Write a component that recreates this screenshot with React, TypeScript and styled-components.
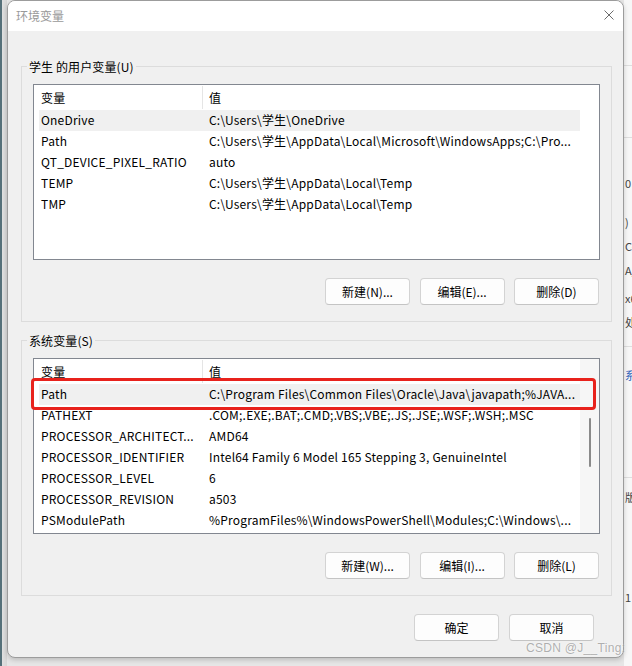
import styled, { createGlobalStyle } from 'styled-components'

interface Variable {
  name: string
  value: string
}

const userVars: Variable[] = [
  { name: 'OneDrive', value: 'C:\\Users\\学生\\OneDrive' },
  { name: 'Path', value: 'C:\\Users\\学生\\AppData\\Local\\Microsoft\\WindowsApps;C:\\Pro...' },
  { name: 'QT_DEVICE_PIXEL_RATIO', value: 'auto' },
  { name: 'TEMP', value: 'C:\\Users\\学生\\AppData\\Local\\Temp' },
  { name: 'TMP', value: 'C:\\Users\\学生\\AppData\\Local\\Temp' },
]

const systemVars: Variable[] = [
  { name: 'Path', value: 'C:\\Program Files\\Common Files\\Oracle\\Java\\javapath;%JAVA...' },
  { name: 'PATHEXT', value: '.COM;.EXE;.BAT;.CMD;.VBS;.VBE;.JS;.JSE;.WSF;.WSH;.MSC' },
  { name: 'PROCESSOR_ARCHITECT...', value: 'AMD64' },
  { name: 'PROCESSOR_IDENTIFIER', value: 'Intel64 Family 6 Model 165 Stepping 3, GenuineIntel' },
  { name: 'PROCESSOR_LEVEL', value: '6' },
  { name: 'PROCESSOR_REVISION', value: 'a503' },
  { name: 'PSModulePath', value: '%ProgramFiles%\\WindowsPowerShell\\Modules;C:\\Windows\\...' },
]

// fragments of the window behind the dialog, top to bottom
const backdrop = [
  { gap: 65, rule: true },
  { gap: 71, rule: true },
  { gap: 37, text: '0' },
  { gap: 23, text: ')' },
  { gap: 8, text: 'C-' },
  { gap: 8, text: 'A/' },
  { gap: 12, text: 'x6' },
  { gap: 8, text: '处' },
  { gap: 16, rule: true },
  { gap: 20, text: '系', link: true },
  { gap: 94, rule: true },
  { gap: 11, text: '版' },
  { gap: 84, text: '1' },
]

const VarList = ({ vars, marked, scrollbar }: { vars: Variable[]; marked?: boolean; scrollbar?: boolean }) => (
  <List>
    <ListBody>
      <HeaderRow>
        <NameHead>变量</NameHead>
        <ValueCell>值</ValueCell>
      </HeaderRow>
      {vars.map((v, index) => (
        <Row key={v.name + index} $selected={index == 0} $marked={marked && index == 0}>
          <NameCell>{v.name}</NameCell>
          <ValueCell>{v.value}</ValueCell>
        </Row>
      ))}
    </ListBody>
    <Gutter $visible={scrollbar}>{scrollbar && <Thumb />}</Gutter>
  </List>
)

const App = () => {
  return (
    <Page>
      <GlobalStyle />
      <LeftEdge>
        <DarkStrip />
      </LeftEdge>
      <Dialog>
        <TitleBar>
          <Title>环境变量</Title>
          <CloseButton>
            <svg width="10" height="10" viewBox="0 0 10 10">
              <path d="M0.5 0.5 L9.5 9.5 M9.5 0.5 L0.5 9.5" stroke="#6b6b6b" strokeWidth="1" />
            </svg>
          </CloseButton>
        </TitleBar>
        <Body>
          <Group $top={27}>
            <Legend>学生 的用户变量(U)</Legend>
            <VarList vars={userVars} />
            <ButtonRow>
              <Button>新建(N)...</Button>
              <Button>编辑(E)...</Button>
              <Button>删除(D)</Button>
            </ButtonRow>
          </Group>
          <Group $top={10}>
            <Legend>系统变量(S)</Legend>
            <VarList vars={systemVars} marked scrollbar />
            <ButtonRow>
              <Button>新建(W)...</Button>
              <Button>编辑(I)...</Button>
              <Button>删除(L)</Button>
            </ButtonRow>
          </Group>
        </Body>
        <Footer>
          <Button>确定</Button>
          <Button>取消</Button>
        </Footer>
      </Dialog>
      <BackWindow>
        {backdrop.map((item, index) =>
          item.rule ? (
            <Rule key={index} $gap={item.gap} />
          ) : (
            <Snip key={index} $gap={item.gap} $link={item.link}>
              {item.text}
            </Snip>
          )
        )}
      </BackWindow>
      <Watermark>CSDN @J__Ting:</Watermark>
    </Page>
  )
}

const GlobalStyle = createGlobalStyle`
  html, body {
    margin: 0;
    padding: 0;
  }
  body {
    width: 632px;
    height: 666px;
    overflow: hidden;
    background: #e9e9e9;
    font-family: "Noto Sans CJK SC", "Liberation Sans", sans-serif;
    font-size: 12px;
    color: #000;
  }
`

const Page = styled.div`
  position: relative;
  display: flex;
  width: 632px;
  height: 666px;
  overflow: hidden;
  background: #e6e6e6;
`

const LeftEdge = styled.div`
  display: flex;
  width: 7px;
  background: linear-gradient(to right, #e4e4e4, #d6d6d6);
`

const DarkStrip = styled.div`
  width: 2px;
  background: #557079;
`

const Dialog = styled.div`
  position: relative;
  z-index: 1;
  box-sizing: border-box;
  display: flex;
  flex-direction: column;
  width: 617px;
  height: 658px;
  border: 1px solid #9c9c9c;
  border-radius: 8px;
  background: #f0f0f0;
  overflow: hidden;
  box-shadow: 0 2px 5px rgba(0, 0, 0, 0.18);
`

const TitleBar = styled.div`
  display: flex;
  align-items: center;
  justify-content: space-between;
  height: 28px;
  padding: 0 0 2px 8px;
  background: #fff;
`

const Title = styled.div`
  color: #999;
  font-size: 12px;
`

const CloseButton = styled.div`
  display: flex;
  align-items: center;
  justify-content: center;
  width: 28px;
  height: 28px;
`

const Body = styled.div`
  display: flex;
  flex-direction: column;
  padding: 0 11px 0 13px;
`

const Group = styled.fieldset<{ $top: number }>`
  margin: ${(p) => p.$top}px 0 0 0;
  padding: 9px 11px 16px 11px;
  min-width: 0;
  border: 1px solid #dcdcdc;
`

const Legend = styled.legend`
  margin-left: -6px;
  padding: 0 2px;
  line-height: 17px;
  font-size: 12px;
  letter-spacing: 0.1px;
`

const List = styled.div`
  box-sizing: border-box;
  display: flex;
  height: 176px;
  border: 1px solid #828790;
  background: #fff;
  letter-spacing: 0.2px;
`

const ListBody = styled.div`
  flex: 1;
  min-width: 0;
  padding-left: 5px;
`

const HeaderRow = styled.div`
  display: grid;
  grid-template-columns: 164px 1fr;
  height: 25px;
  line-height: 25px;
`

const NameHead = styled.div`
  padding-left: 2px;
  margin: 1px 0;
  line-height: 23px;
  border-right: 1px solid #e5e5e5;
`

const Row = styled.div<{ $selected?: boolean; $marked?: boolean }>`
  position: relative;
  display: grid;
  grid-template-columns: 164px 1fr;
  height: 21px;
  line-height: 20px;
  background: ${(p) => (p.$selected ? '#f0f0f0' : 'transparent')};

  &::after {
    content: '';
    display: ${(p) => (p.$marked ? 'block' : 'none')};
    position: absolute;
    top: -6px;
    bottom: -5px;
    left: -8px;
    right: -16px;
    border: 3px solid #e8221c;
    border-radius: 4px;
  }
`

const NameCell = styled.div`
  padding-left: 2px;
  white-space: nowrap;
  overflow: hidden;
`

const ValueCell = styled.div`
  padding-left: 6px;
  white-space: nowrap;
  overflow: hidden;
`

const Gutter = styled.div<{ $visible?: boolean }>`
  width: 19px;
  display: flex;
  justify-content: center;
  background: ${(p) => (p.$visible ? '#f6f6f6' : '#fff')};
`

const Thumb = styled.div`
  width: 2px;
  height: 49px;
  margin-top: 59px;
  border-radius: 1px;
  background: #8a8a8a;
`

const ButtonRow = styled.div`
  display: flex;
  justify-content: flex-end;
  gap: 9.5px;
  margin-top: 18px;
  padding-right: 1px;
`

const Button = styled.div`
  box-sizing: border-box;
  display: flex;
  align-items: center;
  justify-content: center;
  width: 85px;
  height: 27px;
  border: 1px solid #d3d3d3;
  border-bottom-color: #c4c4c4;
  border-radius: 4px;
  background: #fdfdfd;
  font-size: 12px;
`

const Footer = styled.div`
  display: flex;
  justify-content: flex-end;
  gap: 10px;
  margin-top: 18px;
  padding-right: 29px;
`

const BackWindow = styled.div`
  flex: 1;
  display: flex;
  flex-direction: column;
  background: #f7f7f7;
  overflow: hidden;
`

const Rule = styled.div<{ $gap: number }>`
  height: 1px;
  margin-top: ${(p) => p.$gap}px;
  background: #dedede;
`

const Snip = styled.div<{ $gap: number; $link?: boolean }>`
  height: 16px;
  margin-top: ${(p) => p.$gap}px;
  padding-left: 1px;
  line-height: 16px;
  font-size: 11px;
  white-space: nowrap;
  color: ${(p) => (p.$link ? '#2a5cb8' : '#444')};
`

const Watermark = styled.div`
  position: absolute;
  z-index: 2;
  left: 526px;
  top: 641px;
  font-family: "Liberation Sans", sans-serif;
  font-size: 12px;
  letter-spacing: 0.3px;
  color: rgba(150, 150, 150, 0.75);
  text-shadow: 0 0 2px #fff;
  white-space: nowrap;
`

export default App
